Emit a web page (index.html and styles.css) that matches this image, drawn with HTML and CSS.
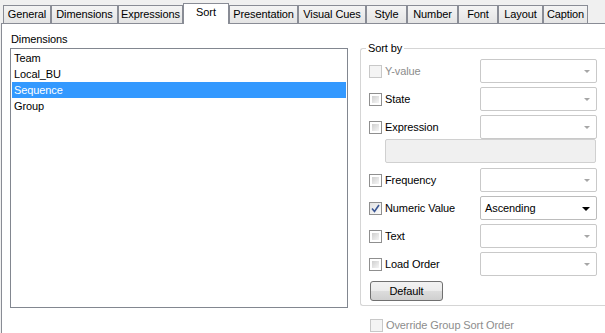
FILE: index.html
```html
<!DOCTYPE html>
<html>
<head>
<meta charset="utf-8">
<link rel="stylesheet" href="styles.css">
</head>
<body>
<div class="tabs">
  <div class="tab t-general">General</div>
  <div class="tab t-dim">Dimensions</div>
  <div class="tab t-expr">Expressions</div>
  <div class="tab t-sort active">Sort</div>
  <div class="tab t-pres">Presentation</div>
  <div class="tab t-vc">Visual Cues</div>
  <div class="tab t-style">Style</div>
  <div class="tab t-num">Number</div>
  <div class="tab t-font">Font</div>
  <div class="tab t-layout">Layout</div>
  <div class="tab t-caption">Caption</div>
</div>
<div class="panel">
  <div class="left">
    <div class="dim-label">Dimensions</div>
    <div class="list">
      <div class="item">Team</div>
      <div class="item">Local_BU</div>
      <div class="item selected">Sequence</div>
      <div class="item">Group</div>
    </div>
  </div>
  <div class="right">
    <div class="group">
      <span class="legend">Sort by</span>
      <div class="row">
        <span class="cb disabled"></span>
        <span class="lbl muted">Y-value</span>
        <div class="combo"><span></span><span class="arrow"></span></div>
      </div>
      <div class="row">
        <span class="cb"></span>
        <span class="lbl">State</span>
        <div class="combo"><span></span><span class="arrow"></span></div>
      </div>
      <div class="row row-tight">
        <span class="cb"></span>
        <span class="lbl">Expression</span>
        <div class="combo"><span></span><span class="arrow"></span></div>
      </div>
      <div class="exprbox"></div>
      <div class="row">
        <span class="cb"></span>
        <span class="lbl">Frequency</span>
        <div class="combo"><span></span><span class="arrow"></span></div>
      </div>
      <div class="row">
        <span class="cb checked"><svg width="9" height="9" viewBox="0 0 9 9"><path d="M1 4.5 L3.5 7.5 L8 1" fill="none" stroke="#3a5694" stroke-width="1.6"/></svg></span>
        <span class="lbl">Numeric Value</span>
        <div class="combo enabled"><span>Ascending</span><span class="arrow"></span></div>
      </div>
      <div class="row">
        <span class="cb"></span>
        <span class="lbl">Text</span>
        <div class="combo"><span></span><span class="arrow"></span></div>
      </div>
      <div class="row row-last">
        <span class="cb"></span>
        <span class="lbl">Load Order</span>
        <div class="combo"><span></span><span class="arrow"></span></div>
      </div>
      <div class="btn">Default</div>
    </div>
    <div class="override">
      <span class="cb disabled"></span>
      <span class="muted">Override Group Sort Order</span>
    </div>
  </div>
</div>
</body>
</html>
```

FILE: styles.css
```css
html, body {
  margin: 0;
  padding: 0;
}
body {
  width: 605px;
  height: 333px;
  overflow: hidden;
  background: #f0f0f0;
  font-family: "Liberation Sans", Arial, sans-serif;
  font-size: 11px;
  letter-spacing: -0.1px;
  color: #000;
}
.tabs {
  display: flex;
  align-items: flex-start;
  height: 23px;
  padding-left: 3px;
  box-sizing: border-box;
}
.tab {
  box-sizing: border-box;
  flex: none;
  height: 18px;
  margin-top: 5px;
  border: 1px solid #898c95;
  border-bottom: none;
  background: linear-gradient(#f4f4f4, #e4e4e4);
  text-align: center;
  line-height: 17px;
  white-space: nowrap;
}
.tab.active {
  height: 21px;
  margin-top: 3px;
  background: #fff;
  position: relative;
  z-index: 1;
  line-height: 17px;
}
.t-general { width: 48px; }
.t-dim { width: 67px; }
.t-expr { width: 65px; }
.t-sort { width: 46px; }
.t-pres { width: 69px; }
.t-vc { width: 68px; }
.t-style { width: 41px; }
.t-num { width: 51px; }
.t-font { width: 40px; }
.t-layout { width: 45px; }
.t-caption { width: 45px; }

.panel {
  margin-left: 1px;
  width: 604px;
  height: 310px;
  box-sizing: border-box;
  border: 1px solid #898c95;
  border-right: none;
  border-bottom: none;
  background: #fff;
  display: flex;
  gap: 12px;
  padding: 8px 0 0 8px;
  overflow: hidden;
}
.left {
  width: 338px;
  flex: none;
}
.dim-label {
  line-height: 14px;
  padding-left: 1px;
  margin-bottom: 2px;
}
.list {
  box-sizing: border-box;
  width: 338px;
  height: 260px;
  border: 1px solid #828790;
  padding: 1px;
}
.item {
  height: 16px;
  line-height: 16px;
  padding-left: 2px;
}
.item.selected {
  background: #3399ff;
  color: #fff;
}
.right {
  margin-top: 16px;
  flex: none;
  width: 245px;
}
.group {
  position: relative;
  border: 1px solid #d5d5d5;
  border-right: none;
  border-radius: 3px 0 0 3px;
  padding: 10px 0 4px 8px;
}
.legend {
  position: absolute;
  top: -8px;
  left: 5px;
  padding: 0 2px;
  background: #fff;
  line-height: 14px;
}
.row {
  display: flex;
  align-items: center;
  height: 24px;
  margin-bottom: 4px;
}
.row-tight { margin-bottom: 0; }
.row-last { margin-bottom: 5px; }
.cb {
  flex: none;
  box-sizing: border-box;
  width: 13px;
  height: 13px;
  border: 1px solid #8f8f8f;
  padding: 2px;
  background: linear-gradient(135deg, #cfcfcf, #f6f6f6) content-box, #fff;
  margin-right: 3px;
  display: flex;
  align-items: center;
  justify-content: center;
}
.cb.disabled {
  border-color: #c8c8c8;
  background: #f4f4f4;
}
.cb.checked {
  padding: 0;
  background: linear-gradient(135deg, #e2e2e2, #fbfbfb);
}
.cb svg { display: block; }
.lbl {
  width: 95px;
  flex: none;
}
.muted { color: #8d8d8d; }
.combo {
  box-sizing: border-box;
  width: 117px;
  height: 24px;
  border: 1px solid #c9c9c9;
  border-radius: 2px;
  background: #fff;
  display: flex;
  align-items: center;
  justify-content: space-between;
  padding: 0 6px 0 4px;
}
.combo.enabled {
  border-color: #bcbcbc;
}
.arrow {
  width: 0;
  height: 0;
  border-left: 3px solid transparent;
  border-right: 3px solid transparent;
  border-top: 3px solid #a6a6a6;
  margin-top: 1px;
}
.combo.enabled .arrow {
  border-left-width: 4px;
  border-right-width: 4px;
  border-top: 4px solid #000;
}
.exprbox {
  box-sizing: border-box;
  width: 211px;
  height: 24px;
  margin-left: 16px;
  margin-bottom: 5px;
  border: 1px solid #d0d0d0;
  border-radius: 2px;
  background: #f0f0f0;
}
.btn {
  box-sizing: border-box;
  width: 73px;
  height: 20px;
  margin-left: 1px;
  border: 1px solid #707070;
  border-radius: 3px;
  background: linear-gradient(#f2f2f2 0%, #ebebeb 50%, #dddddd 50%, #cfcfcf 100%);
  text-align: center;
  line-height: 18px;
}
.override {
  display: flex;
  align-items: center;
  height: 14px;
  margin-top: 12px;
  padding-left: 10px;
}
```
